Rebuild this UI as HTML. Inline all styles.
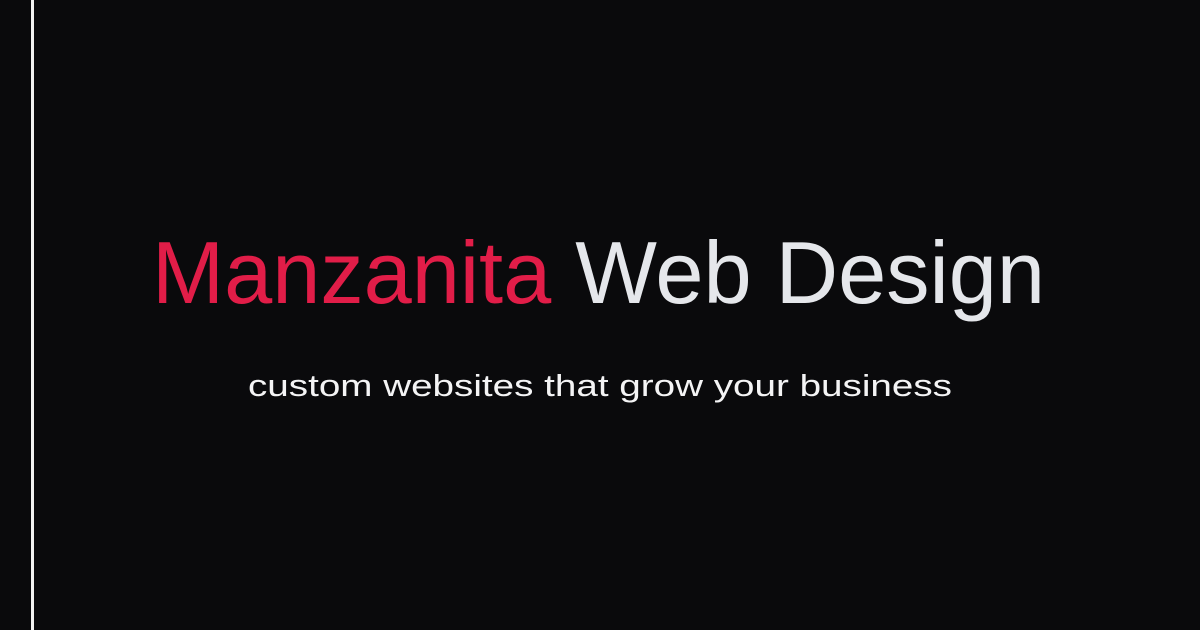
<!DOCTYPE html>
<html><head><meta charset="utf-8"><style>
html,body{margin:0;padding:0;background:#0a0a0c;width:1200px;height:630px;overflow:hidden}
</style></head><body>
<svg width="1200" height="630" xmlns="http://www.w3.org/2000/svg" style="display:block">
<rect width="1200" height="630" fill="#0a0a0c"/>
<rect x="31" y="0" width="3" height="630" fill="#f2f2f2"/>
<text x="152" y="303" font-family="Liberation Sans, sans-serif" font-size="88" textLength="893" lengthAdjust="spacingAndGlyphs"><tspan fill="#e11d48">Manzanita</tspan><tspan fill="#e5e7eb"> Web Design</tspan></text>
<text x="248" y="396" font-family="Liberation Sans, sans-serif" font-size="31" fill="#f4f4f5" textLength="704" lengthAdjust="spacingAndGlyphs">custom websites that grow your business</text>
</svg>
</body></html>
